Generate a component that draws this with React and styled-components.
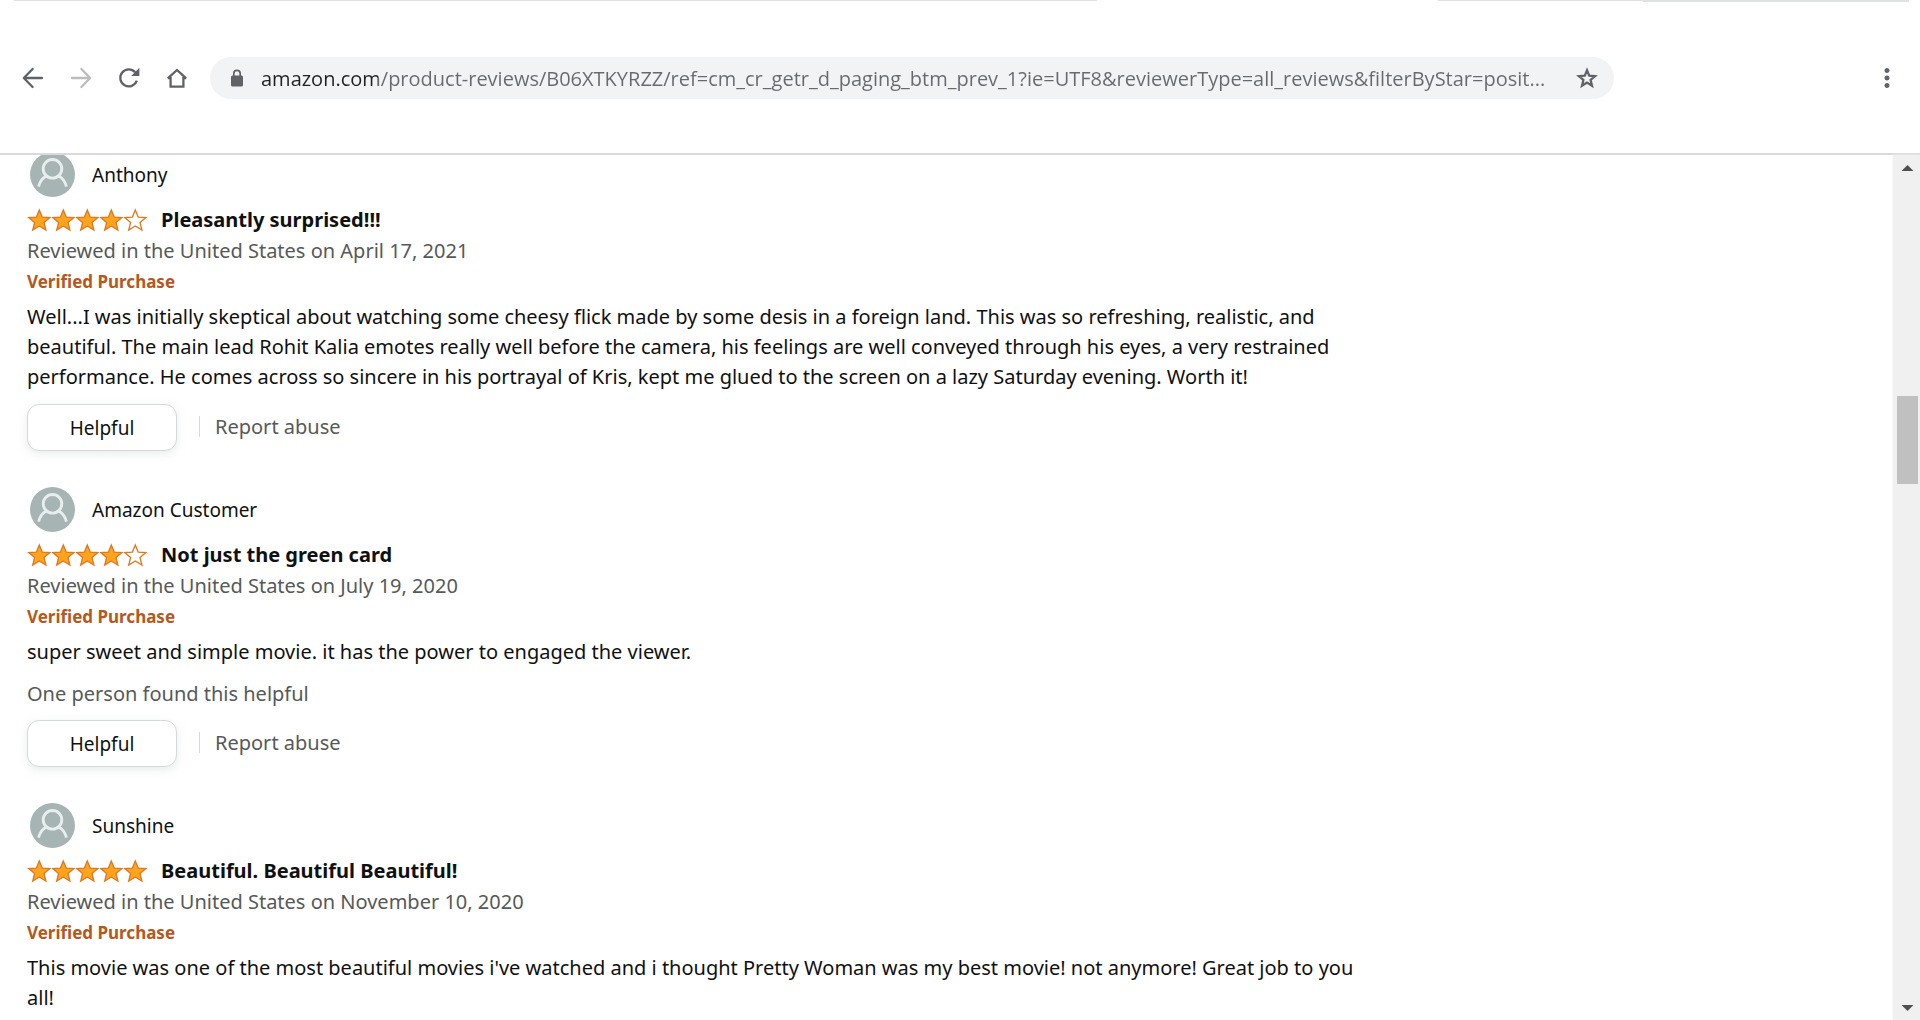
import React from "react";
import styled, { createGlobalStyle } from "styled-components";
import { MdMoreVert } from "react-icons/md";

const colors = {
  text: "#0f1111",
  textSub: "#565959",
  verified: "#b5581d",
  icon: "#5f6368",
  iconDisabled: "#babcbe",
  border: "#d5d9d9",
  chromeLine: "#d9dadb",
  field: "#f1f3f4",
  avatar: "#a7b4b4",
  starFill: "#ffa41c",
  starStroke: "#de7921",
};

const reviews = [
  {
    id: 1,
    name: "Anthony",
    stars: 4,
    title: "Pleasantly surprised!!!",
    date: "Reviewed in the United States on April 17, 2021",
    body: "Well...I was initially skeptical about watching some cheesy flick made by some desis in a foreign land. This was so refreshing, realistic, and beautiful. The main lead Rohit Kalia emotes really well before the camera, his feelings are well conveyed through his eyes, a very restrained performance. He comes across so sincere in his portrayal of Kris, kept me glued to the screen on a lazy Saturday evening. Worth it!",
    canVote: true,
  },
  {
    id: 2,
    name: "Amazon Customer",
    stars: 4,
    title: "Not just the green card",
    date: "Reviewed in the United States on July 19, 2020",
    body: "super sweet and simple movie. it has the power to engaged the viewer.",
    votes: "One person found this helpful",
    canVote: true,
  },
  {
    id: 3,
    name: "Sunshine",
    stars: 5,
    title: "Beautiful. Beautiful Beautiful!",
    date: "Reviewed in the United States on November 10, 2020",
    body: "This movie was one of the most beautiful movies i've watched and i thought Pretty Woman was my best movie! not anymore! Great job to you all!",
    canVote: false,
  },
];

const GlobalStyle = createGlobalStyle`
  * {
    box-sizing: border-box;
  }

  body {
    margin: 0;
    background: #fff;
    color: ${colors.text};
    font-family: "Noto Sans", "Open Sans", sans-serif;
    font-size: 20px;
    line-height: 30px;
  }
`;

// ─── Browser bar ─────────────────────────────────────────────────────────────

const Window = styled.div`
  display: flex;
  flex-direction: column;
  height: 100vh;
  overflow: hidden;
`;

const TabEdge = styled.div`
  display: grid;
  grid-template-columns: 1083fr 341fr 205fr 266fr;
  height: 2px;
  padding: 0 11px 0 14px;
`;

const EdgeLine = styled.span`
  height: ${({ $size }) => $size}px;
  background: #e0e1e1;
`;

const Toolbar = styled.header`
  display: flex;
  align-items: center;
  height: 153px;
  padding: 0 18px;
  border-bottom: 2px solid ${colors.chromeLine};
  flex-shrink: 0;
`;

const NavGroup = styled.nav`
  display: flex;
  gap: 18px;
`;

const IconBtn = styled.button`
  display: flex;
  align-items: center;
  justify-content: center;
  width: 30px;
  height: 30px;
  padding: 0;
  border: 0;
  background: none;
  color: ${colors.icon};
  cursor: pointer;
  flex-shrink: 0;

  &:disabled {
    color: ${colors.iconDisabled};
    cursor: default;
  }
`;

const AddressBar = styled.div`
  display: flex;
  align-items: center;
  flex: 0 1 1404px;
  height: 42px;
  margin-left: 18px;
  padding: 0 12px 0 17px;
  border-radius: 21px;
  background: ${colors.field};
  color: ${colors.icon};
`;

// the host is darker than the rest of the address
const AddressInput = styled.input`
  flex: 1;
  min-width: 0;
  height: 32px;
  margin: 0 16px 0 14px;
  padding: 2px 0 0;
  border: 0;
  outline: 0;
  font: inherit;
  font-family: "Open Sans", "Noto Sans", sans-serif;
  color: ${colors.icon};
  background: linear-gradient(to right, #202124 117px, #666a6e 117px);
  background-clip: text;
  -webkit-text-fill-color: transparent;
`;

const Spacer = styled.div`
  flex: 1;
`;

// ─── Page ────────────────────────────────────────────────────────────────────

const Viewport = styled.div`
  display: flex;
  flex: 1;
  min-height: 0;
`;

const PageArea = styled.main`
  flex: 1;
  min-width: 0;
  overflow: hidden;
`;

const ReviewList = styled.div`
  display: flex;
  flex-direction: column;
  gap: 36px;
  max-width: 1380px;
  margin-top: -3px;
  padding-left: 27px;
`;

const Profile = styled.div`
  display: flex;
  align-items: center;
  gap: 17px;
  height: 45px;
  margin-bottom: 8px;
  padding-left: 3px;
  font-size: 19px;
`;

const RatingRow = styled.div`
  display: flex;
  align-items: center;
  gap: 14px;
  height: 30px;
`;

const Stars = styled.span`
  display: flex;
`;

const Title = styled.a`
  color: ${colors.text};
  font-weight: 700;
  text-decoration: none;
`;

const SubText = styled.p`
  margin: 0;
  color: ${colors.textSub};
`;

const ReviewDate = styled(SubText)`
  margin: 1px 0;
`;

const Verified = styled.p`
  margin: 0 0 5px;
  color: ${colors.verified};
  font-size: 17px;
  font-weight: 700;
`;

const Body = styled.p`
  margin: 0 0 12px;
`;

const Votes = styled(SubText)`
  margin-bottom: 11px;
`;

const Actions = styled.div`
  display: flex;
  align-items: center;
`;

const HelpfulBtn = styled.button`
  width: 150px;
  height: 47px;
  padding: 0;
  border: 1px solid ${colors.border};
  border-radius: 12px;
  background: #fff;
  box-shadow: 0 3px 8px rgba(213, 217, 217, 0.5);
  color: ${colors.text};
  font: inherit;
  font-size: 19px;
  cursor: pointer;
`;

const ReportLink = styled.a`
  display: flex;
  align-items: center;
  gap: 15px;
  margin-left: 22px;
  padding-bottom: 2px;
  color: ${colors.textSub};
  text-decoration: none;

  &::before {
    content: "";
    width: 1px;
    height: 21px;
    background: ${colors.border};
  }
`;

// ─── Scrollbar ───────────────────────────────────────────────────────────────

const Scrollbar = styled.div`
  display: flex;
  flex-direction: column;
  align-items: flex-end;
  width: 27px;
  padding: 10px 2px 9px 0;
  background: #f0f0f0;
  box-shadow: 0 0 3px #f0f0f0;
`;

const Thumb = styled.div`
  width: 21px;
  height: 88px;
  background: #c0c0c0;
`;

const Track = styled.div`
  flex: ${({ $grow }) => $grow};
`;

// ─── Icons ───────────────────────────────────────────────────────────────────

const NavIcon = styled.svg.attrs({ viewBox: "0 0 30 30" })`
  width: 30px;
  height: 30px;
  fill: none;
  stroke: currentColor;
  stroke-width: 2.3;
`;

const BackIcon = () => (
  <NavIcon strokeLinecap="round" strokeLinejoin="round">
    <path d="M24 15H6.2M14.6 6 5.8 15l8.8 9" />
  </NavIcon>
);

const ForwardIcon = () => (
  <NavIcon strokeLinecap="round" strokeLinejoin="round">
    <path d="M6 15h17.8M15.4 6l8.8 9-8.8 9" />
  </NavIcon>
);

const ReloadIcon = () => (
  <NavIcon>
    <path d="M21.2 9.3A8.5 8.5 0 1 0 22.8 17.7" />
    <path d="M25.4 4.8V13h-8.2z" fill="currentColor" stroke="none" />
  </NavIcon>
);

const HomeIcon = () => (
  <NavIcon>
    <path d="M5.8 15.3 15 7l9.2 8.3M5.8 15.2h2.8v8.4h12.8v-8.4h2.8" />
  </NavIcon>
);

const BookmarkIcon = () => (
  <NavIcon>
    <path d="M15 7.2l2.2 5.4 5.9.5-4.5 3.9 1.400 5.700-5-3.100-5 3.100 1.400-5.700-4.500-3.900 5.900-.5z" />
  </NavIcon>
);

const LockIcon = () => (
  <svg width="20" height="20" viewBox="0 0 20 20" fill="none">
    <rect x="4" y="7.5" width="12" height="11" rx="1.5" fill="currentColor" />
    <path d="M6.8 8V5.6a3.2 3.2 0 0 1 6.4 0V8" stroke="currentColor" strokeWidth="1.7" />
  </svg>
);

const Avatar = () => (
  <svg width="45" height="45" viewBox="0 0 45 45" fill="none" stroke="#e8eeee" strokeWidth="2.9">
    <circle cx="22.5" cy="22.5" r="22.5" fill={colors.avatar} stroke="none" />
    <circle cx="22.5" cy="16.8" r="9.3" />
    <path d="M8.6 34.6c1.2-4.8 3.6-8.6 8-10.6M36.4 34.6c-1.2-4.8-3.6-8.6-8-10.6" />
  </svg>
);

const Star = ({ filled }) => (
  <svg width="24" height="24" viewBox="0 0 24 24">
    <path
      d="M12.3 2l2.9 7.1 7.7.5-5.9 4.9 1.9 7.5-6.6-4.1L5.7 22l1.9-7.5-5.9-4.9 7.7-.5z"
      fill={filled ? colors.starFill : "#fff"}
      stroke={colors.starStroke}
      strokeWidth="1.3"
    />
  </svg>
);

const Arrow = ({ down }) => (
  <svg width="21" height="6" viewBox="0 0 21 6" fill="#505050">
    <path d={down ? "M4.5 0h12l-6 6z" : "M4.5 6h12l-6-6z"} />
  </svg>
);

const Review = ({ review }) => (
  <article>
    <Profile>
      <Avatar />
      <span>{review.name}</span>
    </Profile>
    <RatingRow>
      <Stars role="img" aria-label={`${review.stars} out of 5 stars`}>
        {[1, 2, 3, 4, 5].map((n) => (
          <Star key={n} filled={n <= review.stars} />
        ))}
      </Stars>
      <Title href="#">{review.title}</Title>
    </RatingRow>
    <ReviewDate>{review.date}</ReviewDate>
    <Verified>Verified Purchase</Verified>
    <Body>{review.body}</Body>
    {review.votes && <Votes>{review.votes}</Votes>}
    {review.canVote && (
      <Actions>
        <HelpfulBtn>Helpful</HelpfulBtn>
        <ReportLink href="#">Report abuse</ReportLink>
      </Actions>
    )}
  </article>
);

const App = () => (
  <Window>
    <GlobalStyle />
    <TabEdge>
      <EdgeLine $size={1} />
      <EdgeLine $size={0} />
      <EdgeLine $size={1} />
      <EdgeLine $size={2} />
    </TabEdge>
    <Toolbar>
      <NavGroup>
        <IconBtn aria-label="Back">
          <BackIcon />
        </IconBtn>
        <IconBtn aria-label="Forward" disabled>
          <ForwardIcon />
        </IconBtn>
        <IconBtn aria-label="Reload">
          <ReloadIcon />
        </IconBtn>
        <IconBtn aria-label="Home">
          <HomeIcon />
        </IconBtn>
      </NavGroup>
      <AddressBar>
        <LockIcon />
        <AddressInput
          type="text"
          aria-label="Address"
          defaultValue="amazon.com/product-reviews/B06XTKYRZZ/ref=cm_cr_getr_d_paging_btm_prev_1?ie=UTF8&reviewerType=all_reviews&filterByStar=posit..."
        />
        <IconBtn aria-label="Bookmark this page">
          <BookmarkIcon />
        </IconBtn>
      </AddressBar>
      <Spacer />
      <IconBtn aria-label="Menu">
        <MdMoreVert size={30} />
      </IconBtn>
    </Toolbar>
    <Viewport>
      <PageArea>
        <ReviewList>
          {reviews.map((review) => (
            <Review key={review.id} review={review} />
          ))}
        </ReviewList>
      </PageArea>
      <Scrollbar>
        <Arrow />
        <Track $grow={225} />
        <Thumb />
        <Track $grow={521} />
        <Arrow down />
      </Scrollbar>
    </Viewport>
  </Window>
);

export default App;
